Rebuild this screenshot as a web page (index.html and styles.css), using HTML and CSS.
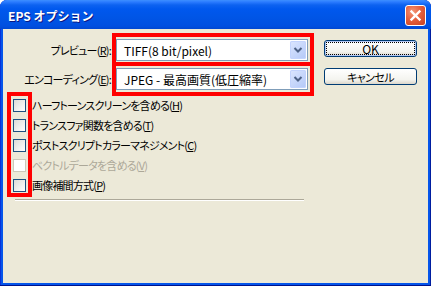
FILE: index.html
```html
<!DOCTYPE html>
<html lang="ja">
<head>
  <meta charset="UTF-8">
  <title>EPS オプション</title>
  <link rel="stylesheet" href="styles.css">
</head>
<body>
  <div class="window">
    <div class="titlebar">
      <span class="title">EPS オプション</span>
      <button class="close-btn" aria-label="閉じる">
        <svg width="13" height="13" viewBox="0 0 13 13"><path d="M2.5 2.5 L10.5 10.5 M10.5 2.5 L2.5 10.5" stroke="#fff" stroke-width="2.4" stroke-linecap="square"/></svg>
      </button>
    </div>

    <div class="content">
      <div class="top">
        <div class="fields">
          <div class="field">
            <label class="field-label">プレビュー(<u>R</u>):</label>
            <div class="combo">
              <span class="combo-text">TIFF(8 bit/pixel)</span>
              <span class="combo-arrow"><svg width="16" height="18" viewBox="0 0 16 18"><path d="M4.5 7 L8 10.5 L11.5 7" fill="none" stroke="#4D6185" stroke-width="2"/></svg></span>
            </div>
          </div>
          <div class="field">
            <label class="field-label">エンコーディング(<u>E</u>):</label>
            <div class="combo">
              <span class="combo-text">JPEG - 最高画質(低圧縮率)</span>
              <span class="combo-arrow"><svg width="16" height="18" viewBox="0 0 16 18"><path d="M4.5 7 L8 10.5 L11.5 7" fill="none" stroke="#4D6185" stroke-width="2"/></svg></span>
            </div>
          </div>
        </div>
        <div class="buttons">
          <button class="btn btn-default"><span class="focus">OK</span></button>
          <button class="btn">キャンセル</button>
        </div>
      </div>

      <!-- オプション -->
      <div class="checks">
        <label class="check"><span class="box"></span><span>ハーフトーンスクリーンを含める(<u>H</u>)</span></label>
        <label class="check"><span class="box"></span><span>トランスファ関数を含める(<u>T</u>)</span></label>
        <label class="check"><span class="box"></span><span>ポストスクリプトカラーマネジメント(<u>C</u>)</span></label>
        <label class="check disabled"><span class="box"></span><span>ベクトルデータを含める(<u>V</u>)</span></label>
        <label class="check"><span class="box"></span><span>画像補間方式(<u>P</u>)</span></label>
      </div>
      <div class="separator"></div>
    </div>

    <!-- 赤枠の注記 -->
    <div class="mark mark-preview"></div>
    <div class="mark mark-encoding"></div>
    <div class="mark mark-checks"></div>
  </div>
</body>
</html>
```

FILE: styles.css
```css
body { margin: 0; background: #fff; font-family: "Noto Sans CJK JP", sans-serif; font-size: 12px; color: #000; }
u { text-decoration: underline; text-underline-offset: 1px; }

.window { position: relative; width: 431px; height: 286px; box-sizing: border-box; display: flex; flex-direction: column; background: #0555EA; border-radius: 7px 7px 0 0; overflow: hidden; box-shadow: inset 0 -1px #00138C, inset 1px 0 #0831D9, inset -1px 0 #001EA0; }

.titlebar { height: 29px; flex: none; display: flex; align-items: center; padding: 1px 5px 0 8px; box-sizing: border-box; background: linear-gradient(#3D8FFF 0, #2A7BFF 2px, #0D62F0 5px, #0058EE 9px, #0055E6 60%, #004FE0 90%, #0047D2 100%); }
.title { flex: 1; color: #fff; font-weight: bold; font-size: 12px; text-shadow: 1px 1px 0 #0A1883; }
.close-btn { width: 21px; height: 21px; padding: 0; border: 1px solid #fff; border-radius: 3px; background: radial-gradient(circle at 35% 30%, #F39778 0, #E5603F 45%, #C9401E 100%); display: flex; align-items: center; justify-content: center; }

.content { flex: 1; margin: 0 3px 3px; padding-top: 10px; background: #ECE9D8; }

.top { display: flex; }
.fields { display: flex; flex-direction: column; gap: 7px; }
.field { display: flex; align-items: center; }
.field-label { width: 113px; box-sizing: border-box; padding-right: 5px; text-align: right; white-space: nowrap; font-size: 11px; letter-spacing: -0.8px; font-feature-settings: "palt"; }
.combo { width: 192px; height: 22px; box-sizing: border-box; border: 1px solid #7F9DB9; background: #fff; display: flex; align-items: center; padding: 1px; }
.combo-text { flex: 1; padding-left: 6px; white-space: nowrap; }
.combo-arrow { width: 16px; height: 18px; border-radius: 2px; background: linear-gradient(135deg, #DCE6FE, #B3C8F8); box-shadow: inset 0 0 0 1px #C3D3FD; display: flex; }

.buttons { display: flex; flex-direction: column; gap: 11px; margin-left: 16px; padding-top: 1px; }
.btn { width: 93px; height: 17px; padding: 0; border: 1px solid #003C74; border-radius: 3px; background: linear-gradient(#FFFFFF, #F4F4EF 70%, #DCD7CB); font: inherit; font-size: 11px; letter-spacing: -0.6px; color: #000; display: flex; align-items: center; justify-content: center; font-feature-settings: "palt"; }
.btn-default { padding: 1px; font-size: 12px; letter-spacing: 0; box-shadow: inset 0 0 0 1px #B4C8F6; }
.focus { flex: 1; align-self: stretch; display: flex; align-items: center; justify-content: center; border: 1px dotted #000; }

.checks { display: flex; flex-direction: column; margin-top: 5px; padding-left: 10px; }
.check { height: 20px; display: flex; align-items: center; gap: 6px; white-space: nowrap; font-size: 11px; letter-spacing: -0.8px; font-feature-settings: "palt"; }
.box { width: 13px; height: 13px; box-sizing: border-box; flex: none; border: 1px solid #1C5180; background: linear-gradient(135deg, #DCDCD7, #FFFFFF); }
.check.disabled { color: #ACA899; }
.check.disabled .box { border-color: #CAC8BB; background: #fff; }

.separator { width: 289px; height: 1px; margin: 4px 0 0 12px; background: #ACA899; border-bottom: 1px solid #fff; }

.mark { position: absolute; box-sizing: border-box; border: 4px solid #F00; }
.mark-preview { left: 112px; top: 33px; width: 202px; height: 33px; }
.mark-encoding { left: 112px; top: 62px; width: 202px; height: 34px; }
.mark-checks { left: 7px; top: 92px; width: 25px; height: 105px; }
```
